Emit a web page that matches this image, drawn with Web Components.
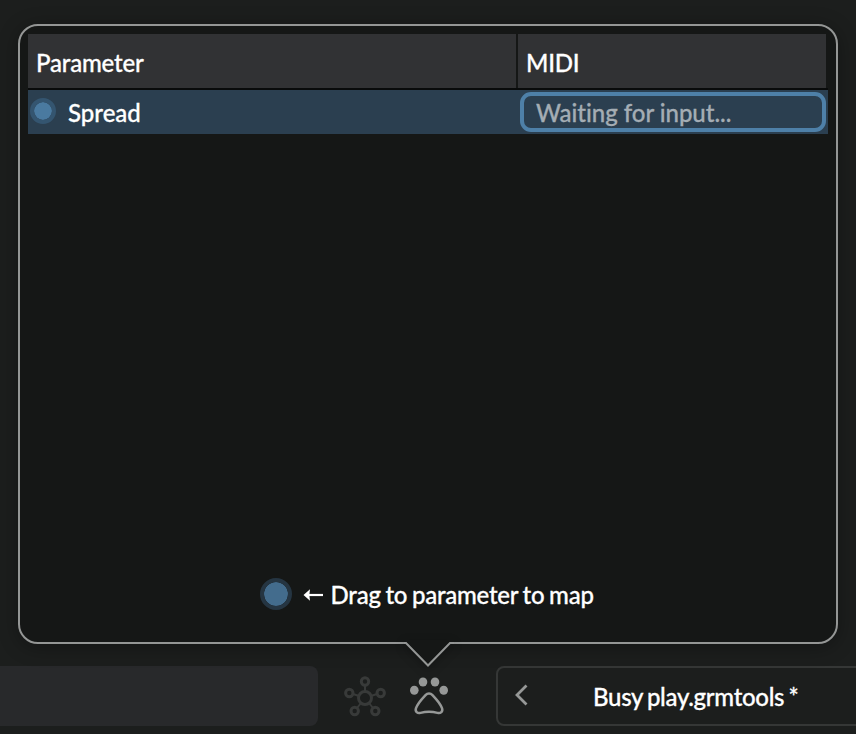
<!DOCTYPE html>
<html lang="en">
<head>
<meta charset="utf-8">
<title>MIDI mapping</title>
<style>
html,body{margin:0;height:100%;overflow:hidden;background:#1c1e1d}
body{font:500 24px/28px Lato,"Liberation Sans",sans-serif;color:#fff;-webkit-text-stroke:.28px currentColor}
</style>
</head>
<body>
<mapping-app></mapping-app>
<script>
function define(name, html) {
  const t = document.createElement('template');
  t.innerHTML = html;
  customElements.define(name, class extends HTMLElement {
    constructor() {
      super();
      this.attachShadow({mode: 'open'}).appendChild(t.content.cloneNode(true));
    }
  });
}

define('map-dot', `
<style>:host{display:block;box-sizing:border-box;flex:none;width:var(--size,26px);height:var(--size,26px);border-radius:50%;
border:4px solid var(--ring,#345570);background:var(--fill,#4a7aa0);background-clip:padding-box}</style>`);

define('header-cell', `
<style>:host{display:flex;box-sizing:border-box;height:54px;padding:4px 0 0 8px;align-items:center;background:#313234;white-space:nowrap}
span{letter-spacing:-.2px}</style>
<span><slot></slot></span>`);

define('mapping-row', `
<style>:host{display:grid;grid-template-columns:490px 308px;width:800px;height:44px;background:#2b3f50;box-sizing:border-box;column-gap:2px}
.name{display:flex;padding:0 0 0 2px}
.name map-dot{margin-top:8px}
.name span{margin:9px 0 0 12px}
</style>
<div class="name"><map-dot></map-dot><span><slot></slot></span></div>
<slot name="value"></slot>`);

define('midi-input', `
<style>:host{display:block;box-sizing:border-box;width:306px;height:40px;margin-top:2px;border:4px solid #4e80a8;border-radius:11px;
padding:3px 0 0 12px;color:#a4adb4;white-space:nowrap}
span{letter-spacing:-.03px}</style>
<span><slot></slot></span>`);

define('map-hint', `
<style>:host{display:flex;align-items:flex-start;white-space:nowrap;--size:32px;--ring:#253542;--fill:#436c8d}
svg{margin:8px 0 0 11px;flex:none}
span{margin:3px 0 0 6.500px;letter-spacing:-.24px;word-spacing:-1.100px}</style>
<map-dot></map-dot>
<svg width="21" height="18" viewBox="0 0 21 18"><path d="M5 9H20" stroke="#fff" stroke-width="2.200"/><path d="M.5 9L7 3.300L6.300 9L7 14.700Z" fill="#fff"/></svg>
<span><slot></slot></span>`);

define('callout-panel', `
<style>:host{display:block;position:relative;box-sizing:border-box;width:820px;height:620px;margin:24px 0 0 18px;
border:2px solid #949695;border-radius:20px;background:#151716;box-shadow:0 3px 20px rgba(0,0,0,.32);padding:8px}
.tip{position:absolute;left:384px;top:614px;filter:drop-shadow(0 3px 5px rgba(0,0,0,.25))}
.body{display:flex;flex-direction:column;height:100%}
</style>
<div class="body"><slot></slot></div>
<svg class="tip" width="50" height="29" viewBox="0 0 50 29"><path d="M1.500 0V2.500L24 25.500L46.500 2.500V0Z" fill="#151716"/><path d="M0 3H2L24 25.500L46 3H50" fill="none" stroke="#949695" stroke-width="2"/></svg>`);

define('network-icon', `
<style>:host{display:block;width:42px;height:42px}svg{display:block}</style>
<svg width="42" height="42" viewBox="0 0 42 42" fill="none" stroke="#383a39" stroke-width="3">
<circle cx="21" cy="22" r="6.500"/><circle cx="21" cy="5.500" r="3.700"/><circle cx="5.300" cy="17" r="3.700"/><circle cx="36.700" cy="17" r="3.700"/><circle cx="10.700" cy="35" r="3.700"/><circle cx="31.300" cy="35" r="3.700"/>
<path stroke-width="2" d="M21 9V15.500M9 18L15 20M33 18L27 20M13 32L17 27M29 32L25 27"/></svg>`);

define('paw-icon', `
<style>:host{display:block;width:40px;height:40px}svg{display:block}</style>
<svg width="40" height="40" viewBox="0 0 40 40"><g fill="#969897"><ellipse cx="5.300" cy="13.200" rx="4.300" ry="4.500"/><ellipse cx="14" cy="5" rx="4.300" ry="4.500"/><ellipse cx="26" cy="5" rx="4.300" ry="4.500"/><ellipse cx="34.700" cy="13.200" rx="4.300" ry="4.500"/></g>
<path d="M16.500 18.200C18.500 16 21.500 16 23.500 18.200C27 21.900 31.200 26.200 33 31.200C34.200 34.700 31.500 36.700 28.500 35.900C22.500 34.400 17.500 34.400 11.500 35.900C8.500 36.700 5.800 34.700 7 31.200C8.800 26.200 13 21.900 16.500 18.200Z" fill="none" stroke="#969897" stroke-width="2.500"/></svg>`);

define('preset-box', `
<style>:host{display:flex;box-sizing:border-box;width:380px;height:60px;border:2px solid #353736;border-radius:8px;white-space:nowrap}
svg{margin:16px 0 0 16px;flex:none}
span{margin:15px 0 0 65px;letter-spacing:-.3px;word-spacing:-1.500px}</style>
<svg width="14" height="24" viewBox="0 0 14 24"><path d="M12.500 1.500L3 11L12.500 20.500" fill="none" stroke="#969897" stroke-width="2.800"/></svg>
<span><slot></slot></span>`);

define('bottom-bar', `
<style>:host{display:flex;height:60px;margin-top:22px;width:876px}
.slot{width:318px;height:60px;background:#28292b;border-radius:0 8px 8px 0;flex:none}
network-icon{margin:9.500px 0 0 26px}paw-icon{margin:11px 0 0 23px}preset-box{margin-left:47px;flex:none}</style>
<div class="slot"></div><network-icon></network-icon><paw-icon></paw-icon><preset-box><slot></slot></preset-box>`);

define('mapping-app', `
<style>:host{display:flow-root;width:856px;height:734px;overflow:hidden}
.head{display:grid;grid-template-columns:488px 308px;column-gap:2px;width:800px;height:56px;background:linear-gradient(#151716 54px,#090b0b 54px)}
map-hint{margin:auto 0 24px 232px}
</style>
<callout-panel>
<div class="head"><header-cell>Parameter</header-cell><header-cell>MIDI</header-cell></div>
<mapping-row>Spread<midi-input slot="value">Waiting for input...</midi-input></mapping-row>
<map-hint>Drag to parameter to map</map-hint>
</callout-panel>
<bottom-bar>Busy play.grmtools *</bottom-bar>`);
</script>
</body>
</html>
